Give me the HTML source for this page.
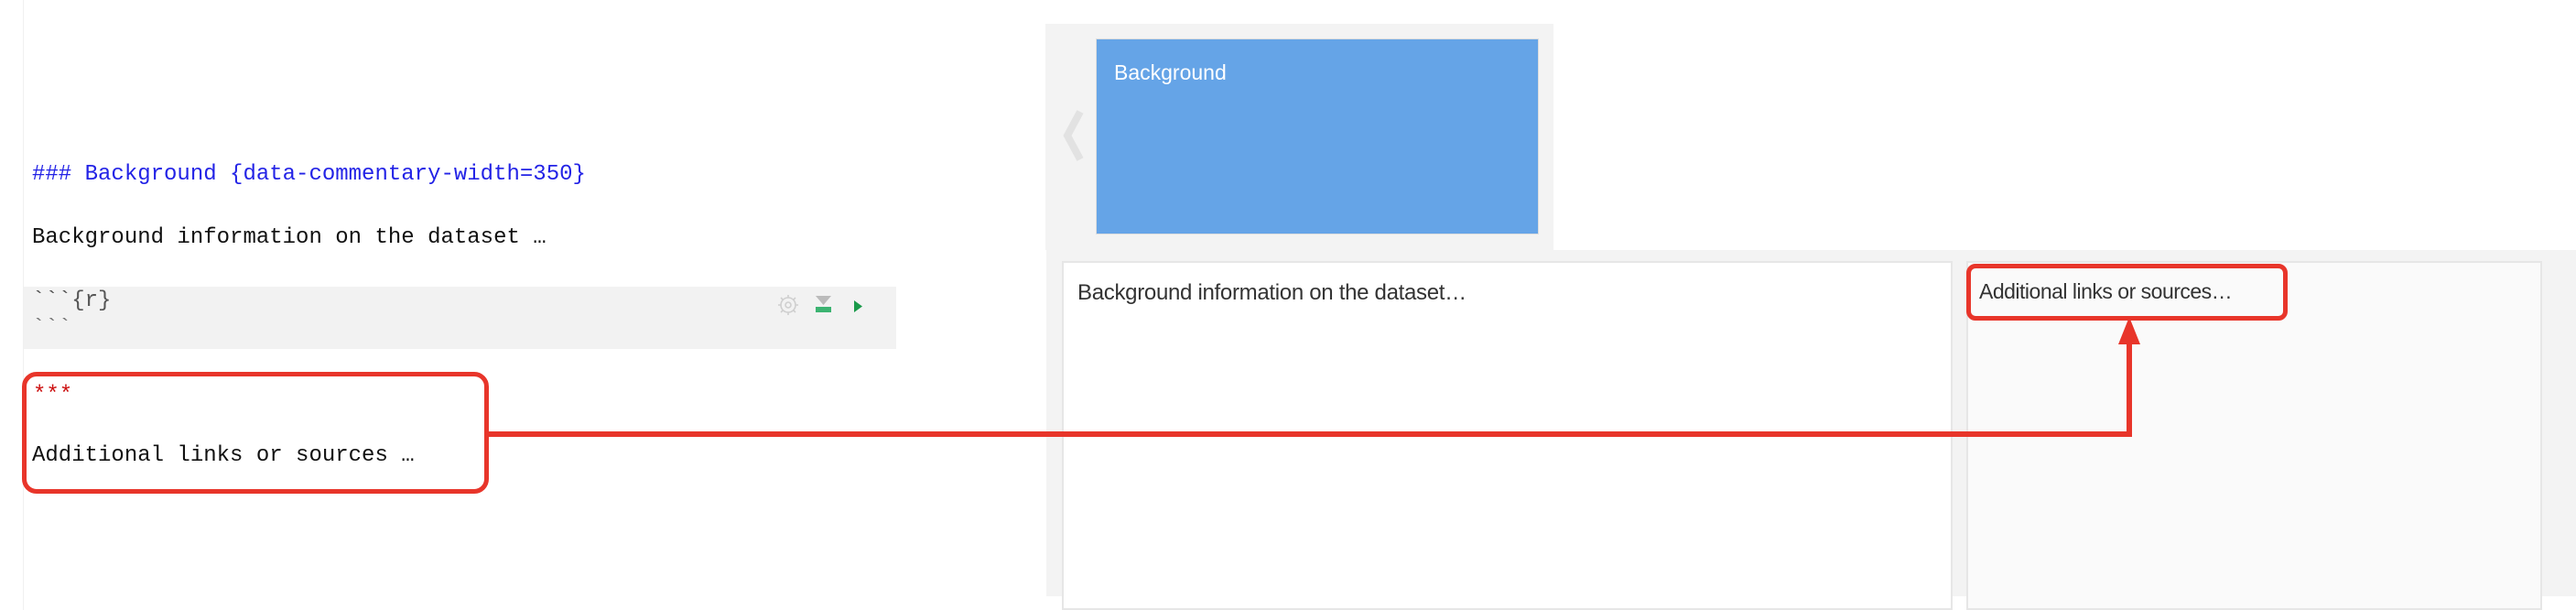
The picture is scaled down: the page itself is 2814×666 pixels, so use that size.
<!DOCTYPE html>
<html><head><style>
body{margin:0;width:2814px;height:666px;background:#fff;position:relative;overflow:hidden;font-family:"Liberation Sans",sans-serif}
.a{position:absolute}
.mono{font-family:"Liberation Mono","DejaVu Sans Mono",monospace;font-size:24px;white-space:pre}
</style></head><body>
<div class="a" style="left:25px;top:0;width:1px;height:666px;background:#f0f0f0"></div>
<div class="a mono" style="left:35px;top:177px;color:#2323e6">### Background {data-commentary-width=350}</div>
<div class="a mono" style="left:35px;top:246px;color:#111">Background information on the dataset …</div>
<div class="a" style="left:26px;top:313px;width:953px;height:68px;background:#f2f2f2"></div>
<div class="a mono" style="left:35px;top:315px;color:#555">&#96;&#96;&#96;{r}</div>
<div class="a mono" style="left:35px;top:345px;color:#777">&#96;&#96;&#96;</div>
<svg class="a" style="left:846px;top:320px" width="100" height="28" viewBox="0 0 100 28">
<g transform="translate(15,13)" fill="none" stroke="#cfcfcf" stroke-width="1.6">
<circle r="8"/><circle r="3"/>
<path d="M0-11V-8M0 8V11M-11 0H-8M8 0H11M-8-8-6-6M6 6 8 8M8-8 6-6M-6 6-8 8"/>
</g>
<path d="M45 3H62L53.5 13Z" fill="#bbb"/><rect x="45" y="15" width="17" height="6" fill="#3cb371"/>
<path d="M87 8V21L96 14.5Z" fill="#1a9a4a"/>
</svg>
<div class="a" style="left:24px;top:406px;width:500px;height:123px;border:5px solid #e8352a;border-radius:16px"></div>
<div class="a mono" style="left:36px;top:418px;color:#cc1010">***</div>
<div class="a mono" style="left:35px;top:484px;color:#111">Additional links or sources …</div>

<div class="a" style="left:1142px;top:26px;width:555px;height:247px;background:#f3f3f3"></div>
<div class="a" style="left:1197px;top:42px;width:484px;height:214px;background:#65a4e7;border:1px solid #ddd;box-sizing:border-box"></div>
<div class="a" style="left:1217px;top:66px;color:#fff;font-size:23px">Background</div>
<svg class="a" style="left:1158px;top:118px" width="30" height="60"><path d="M22 4 8 30 22 56" fill="none" stroke="#e2e2e2" stroke-width="8"/></svg>
<div class="a" style="left:1143px;top:273px;width:1671px;height:378px;background:#f3f3f3"></div>
<div class="a" style="left:1160px;top:285px;width:973px;height:381px;background:#fff;border:2px solid #e6e6e6;box-sizing:border-box"></div>
<div class="a" style="left:2148px;top:285px;width:629px;height:381px;background:#fafafa;border:2px solid #e6e6e6;box-sizing:border-box"></div>
<div class="a" style="left:1177px;top:306px;color:#333;font-size:24px;letter-spacing:-0.3px">Background information on the dataset…</div>
<div class="a" style="left:2162px;top:305px;color:#333;font-size:23px;letter-spacing:-0.5px">Additional links or sources…</div>
<div class="a" style="left:2148px;top:288px;width:341px;height:52px;border:5px solid #e8352a;border-radius:10px"></div>
<div class="a" style="left:529px;top:471px;width:1800px;height:6px;background:#e8352a"></div>
<div class="a" style="left:2323px;top:370px;width:6px;height:107px;background:#e8352a"></div>
<svg class="a" style="left:2313px;top:346px" width="26" height="30"><path d="M13 0 1 30H25Z" fill="#e8352a"/></svg>
</body></html>
